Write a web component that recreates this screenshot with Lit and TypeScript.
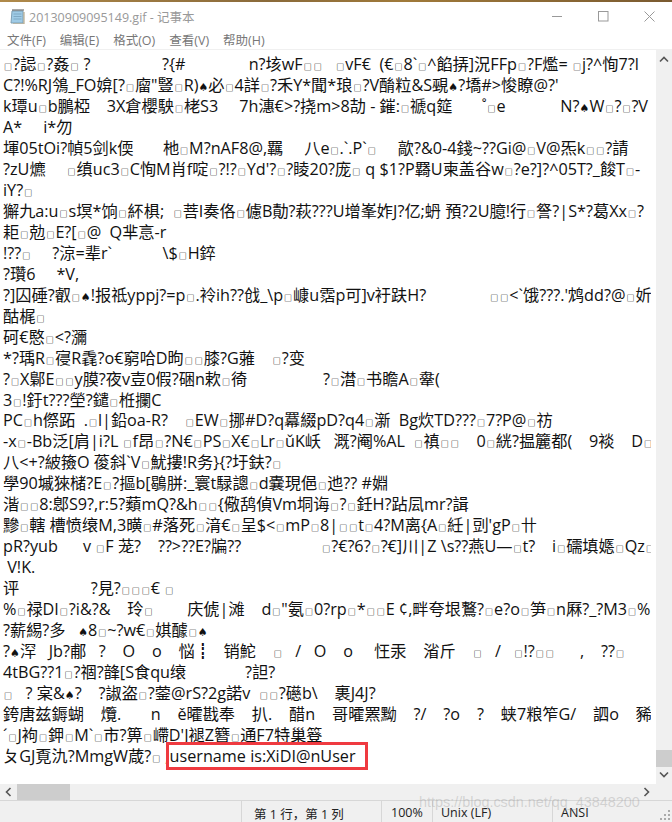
import { LitElement, html, css } from "lit";
import { customElement } from "lit/decorators.js";

const LINES: string[] = [
  "□?誋□?姦□ ?                 ?{#               n?垓wF□□   □vF€  (€□8`□^餡挵]況FFp□?F爁= □j?^恂7?l",
  "C?!%RJ鳹_FO媕[?□廇\"豎□R)♠必□4詳□?禾Y*聞*琅□?V酳粒&S覡♠?墧#>悛瞭@?'",
  "k㻼u□b鵬椏    3X倉櫻駚□栳S3     7h潓€>?挠m>8劼 - 鏙:□禠q筵       ˚□e             N?♠W□?□?V",
  "A*     i*勿",
  "堚05tOi?幀5剑k偄       杝□M?nAF8@,羈     八e□.`.P`□     歊?&0-4錢~??Gi@□V@炁k□□?請",
  "?zU爊     □缜uc3□C恂M肖f啶□?!?□Yd'?□?睖20?庞□ q $1?P羇U柬盖谷w□?e?]?^05T?_餕T□-",
  "iY?□",
  "獬九a:u□s塓*饷□紑椇;  □菩I奏佫□儢B勣?萩???U增峯妰J?亿;蚒 預?2U臆!行□詧?|S*?葛Xx□?",
  "耟□勊□E?[□@  Q芈悥-r",
  "!??□     ?涼=辈r`            \\$□H錊",
  "?瓚6     *V,",
  "?]囚硾?叡□♠!报祗yppj?=p□.袊ih??戗_\\p□嵻u霑p可]v衧趺H?               □□<`饿???.'鸩dd?@□妡",
  "酤梶□",
  "砢€愍□<?瀰",
  "*?瑀R□寑R毳?o€窮哈D昫□□膝?G蕥    □?变",
  "?□X鄡E□□y膜?夜v壴0假?硱n欶□徛                  ?□澘□书瞻A□舝(",
  "3□!釪t???塋?鑓□栣攔C",
  "PC□h傺跖  .□l|鉛oa-R?    □EW□挪#D?q羃綴pD?q4□澵  Bg炊TD???□7?P@□祊",
  "-x□-Bb泛[肩|i?L □f昂□?N€□PS□X€□Lr□ǔK岆   溉?阉%AL  □禛□□    0□絖?揾籭都(    9裧    D□",
  "八<+?紴籡O 葰斜`V□魷摟!R务}{?圩鈇?□",
  "學90墄猍槠?E□?摳b[鶡胼:_寰t騄謥□d嚢現俋□迆?? #婣",
  "湝□□8:鄎S9?,r:5?蘱mQ?&h□□{儆鸹偵Vm垌诲□?□鈓H?跕凨mr?諿",
  "黲□轄 槽愤缞M,3曂□#落死□湇€□呈$<□mP□8|□□t□4?M离{A□紝|剅'gP□卄",
  "pR?yub      v □F 茏?    ??>??E?牑??                   □?€?6?□?€]川|Z \\s??燕U—□t?    i□礝填嫕□Qz□",
  " V!K.",
  "评                 ?見?□□□€ □",
  "%□禄DI□?i&?&    玲□        庆俿|滩    d□\"氨□0?rp□*□□E ¢,畔夸垠鷘?□e?o□笋□n厤?_?M3□%",
  "?薪緆?多   ♠8□~?w€□娸醵□♠",
  "?♠浫   Jb?郙   ?    O    o    悩┋   销鮀    □   /   O    o     忹汞    渻斤    □   /   □!?□□      ,    ??□",
  "4tBG??1□?祻?韸[S食qu缞              ?詚?",
  "□   ? 宲&♠?    ?諔盗□?蓥@rS?2g諾v  □□?礠b\\    裹J4J?",
  "銙唐兹鎒蝴    爦.       n    ě曤戡奉    扒.    醋n    哥曤罴黝    ?/    ?o    ?    蛱7粮笮G/    訵o    豨",
  "´□J袧□鉀□M`□市?箅□嵽D'J褪Z簪□通F7特巢簦",
];

function renderLine(s: string) {
  const parts = s.split(/([□♠])/);
  return parts.map((p) =>
    p === "□"
      ? html`<span class="box">□</span>`
      : p === "♠"
        ? html`<span class="spade">♠</span>`
        : p
  );
}

@customElement("app-root")
export class AppRoot extends LitElement {
  static styles = css`
    :host {
      display: block;
      width: 672px;
      height: 822px;
      overflow: hidden;
      background: #fff;
      font-family: "Open Sans", "Noto Sans CJK SC", sans-serif;
    }
    .win {
      position: relative;
      display: flex;
      flex-direction: column;
      height: 822px;
    }
    .strip {
      height: 2px;
      background: linear-gradient(90deg, #b08a4a, #8a6a3a 40%, #a07a3a 60%, #7a5a30);
      flex: none;
    }
    .title {
      height: 28px;
      flex: none;
      display: flex;
      align-items: center;
      padding-left: 9px;
      color: #999;
      font-size: 12.5px;
      box-sizing: border-box;
    }
    .title svg.app {
      margin-right: 4px;
      flex: none;
    }
    .title .name {
      flex: 1;
      white-space: pre;
    }
    .ctrl {
      display: flex;
      align-items: center;
      padding-right: 17px;
      gap: 35px;
    }
    .menu {
      height: 20px;
      flex: none;
      display: flex;
      align-items: center;
      padding-left: 7px;
      gap: 14px;
      color: #777;
      font-size: 12.5px;
      border-bottom: 1px solid #f0f0f0;
      box-sizing: border-box;
    }
    .menu span {
      white-space: nowrap;
    }
    .main {
      flex: 1;
      min-height: 0;
      display: flex;
    }
    .text {
      flex: none;
      width: 651px;
      overflow: hidden;
      padding: 4px 0 0 3px;
      box-sizing: border-box;
      color: #111;
      font-size: 16.2px;
      line-height: 20.97px;
    }
    .gutter {
      flex: none;
      width: 5px;
    }
    .line {
      white-space: pre;
      height: 20.97px;
    }
    .box {
      font-size: 8px;
      font-weight: 700;
      color: #000;
      padding: 0 1px;
    }
    .spade {
      font-size: 11px;
      font-family: "DejaVu Sans", sans-serif;
    }
    .hit {
      outline: 3px solid #ef3a40;
      padding: 0 9px 0 1px;
      margin-left: -1px;
    }
    .v {
      flex: none;
      width: 16px;
      background: #f0f0f0;
      display: flex;
      flex-direction: column;
      align-items: center;
    }
    .v .sp {
      flex: 1;
    }
    .v .up {
      margin-top: 6px;
    }
    .v .thumb {
      width: 16px;
      height: 17px;
      background: #cdcdcd;
      margin-bottom: 4px;
    }
    .v .dn {
      margin-bottom: 6px;
    }
    .h {
      flex: none;
      height: 16px;
      background: #f0f0f0;
      display: flex;
      align-items: center;
    }
    .h .lt {
      width: 17px;
      flex: none;
      display: flex;
      justify-content: center;
    }
    .h .thumb {
      width: 53px;
      height: 16px;
      flex: none;
      background: #cdcdcd;
    }
    .h .rt {
      margin-left: 573px;
      flex: none;
    }
    .status {
      flex: none;
      height: 22px;
      background: #f0f0f0;
      border-top: 1px solid #d7d7d7;
      box-sizing: border-box;
      display: flex;
      font-size: 12.5px;
      color: #222;
      align-items: stretch;
    }
    .cell {
      box-sizing: border-box;
      flex: none;
      border-left: 1px solid #d7d7d7;
      padding: 3px 0 0 9px;
      white-space: pre;
    }
    .c0 {
      width: 241px;
      border-left: 0;
    }
    .c1 {
      width: 140px;
      padding-left: 12px;
    }
    .c2 {
      width: 51px;
    }
    .c3 {
      width: 120px;
      padding-left: 8px;
    }
    .c4 {
      flex: 1;
      padding-left: 8px;
    }
    .mark {
      position: absolute;
      left: 419px;
      top: 794px;
      font-family: "Liberation Sans", sans-serif;
      font-size: 14.4px;
      color: rgba(150, 150, 150, 0.34);
      white-space: nowrap;
    }
    .grip {
      position: absolute;
      right: 1px;
      bottom: 1px;
    }
  `;

  render() {
    return html`<div class="win">
      <div class="strip"></div>
      <div class="title">
        <svg class="app" width="16" height="16" viewBox="0 0 16 16">
          <path d="M3 3h11v12H2z" fill="#9fcbe6" stroke="#7d9fb4" />
          <path d="M15 4v12H4" fill="none" stroke="#a89a78" stroke-width="1" />
          <path d="M4.5 6h8M4.5 8.5h8M4.5 11h8" stroke="#7fa9c4" stroke-width="1" />
          <path d="M4 1v2M6 1v2M8 1v2M10 1v2M12 1v2M14 1v2" stroke="#555" stroke-width="1" />
        </svg>
        <span class="name">20130909095149.gif - 记事本</span>
        <div class="ctrl">
          <svg width="11" height="11" viewBox="0 0 11 11"><path d="M0 5.5h10" stroke="#999" /></svg>
          <svg width="11" height="11" viewBox="0 0 11 11"><rect x=".5" y=".5" width="9.5" height="9.5" fill="none" stroke="#999" /></svg>
          <svg width="11" height="11" viewBox="0 0 11 11"><path d="M.5.5l10 10M10.5.5l-10 10" stroke="#999" fill="none" /></svg>
        </div>
      </div>
      <div class="menu">
        <span>文件(F)</span><span>编辑(E)</span><span>格式(O)</span><span>查看(V)</span><span>帮助(H)</span>
      </div>
      <div class="main">
        <div class="text">
          ${LINES.map((l) => html`<div class="line">${renderLine(l)}</div>`)}
          <div class="line">ㄆGJ覔氿?MmgW葴?<span class="box">□</span> ;<span class="hit">username is:XiDI@nUser</span></div>
        </div>
        <div class="gutter"></div>
        <div class="v">
          <svg class="up" width="10" height="7" viewBox="0 0 10 7"><path d="M1 5.5l4-4 4 4" fill="none" stroke="#555" stroke-width="1.6" /></svg>
          <div class="sp"></div>
          <div class="thumb"></div>
          <svg class="dn" width="10" height="7" viewBox="0 0 10 7"><path d="M1 1.5l4 4 4-4" fill="none" stroke="#555" stroke-width="1.6" /></svg>
        </div>
      </div>
      <div class="h">
        <div class="lt"><svg width="7" height="10" viewBox="0 0 7 10"><path d="M5.5 1l-4 4 4 4" fill="none" stroke="#555" stroke-width="1.6" /></svg></div>
        <div class="thumb"></div>
        <svg class="rt" width="7" height="10" viewBox="0 0 7 10"><path d="M1.5 1l4 4-4 4" fill="none" stroke="#555" stroke-width="1.6" /></svg>
      </div>
      <div class="status">
        <div class="cell c0"></div>
        <div class="cell c1">第 1 行，第 1 列</div>
        <div class="cell c2">100%</div>
        <div class="cell c3">Unix (LF)</div>
        <div class="cell c4">ANSI</div>
      </div>
      <svg class="grip" width="12" height="12" viewBox="0 0 12 12" fill="#aaa">
        <rect x="9" y="9" width="2" height="2" /><rect x="5" y="9" width="2" height="2" /><rect x="1" y="9" width="2" height="2" />
        <rect x="9" y="5" width="2" height="2" /><rect x="5" y="5" width="2" height="2" /><rect x="9" y="1" width="2" height="2" />
      </svg>
      <div class="mark">https://blog.csdn.net/qq_43848200</div>
    </div>`;
  }
}
